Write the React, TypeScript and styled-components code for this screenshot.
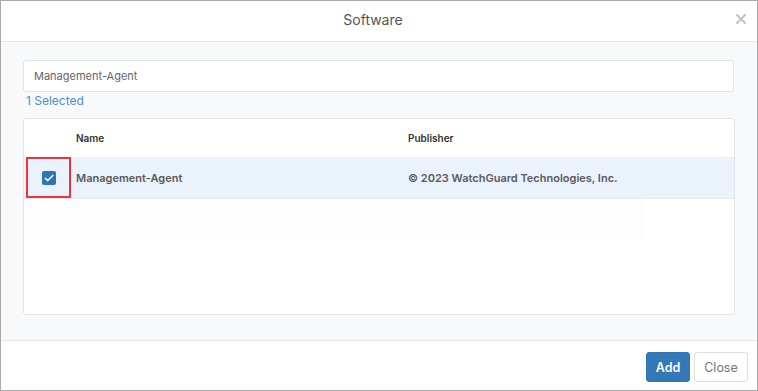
import React from "react";
import styled, { createGlobalStyle } from "styled-components";

const GlobalStyle = createGlobalStyle`
  html, body {
    margin: 0;
    padding: 0;
    background: #ffffff;
    font-family: Inter, "Noto Sans", "Liberation Sans", sans-serif;
  }
  * { box-sizing: border-box; }
`;

const rows = [
  { name: "Management-Agent", publisher: "© 2023 WatchGuard Technologies, Inc.", checked: true },
];

export default function App() {
  return (
    <>
      <GlobalStyle />
      <Modal>
        <Header>
          <Title>Software</Title>
          <CloseX aria-label="close">
            <svg width="10" height="10" viewBox="0 0 10 10">
              <path d="M1 1 L9 9 M9 1 L1 9" stroke="#c4c4c4" strokeWidth="2" strokeLinecap="square" />
            </svg>
          </CloseX>
        </Header>

        <Body>
          <Search value="Management-Agent" readOnly />
          <Selected>1 Selected</Selected>

          <TableCard>
            <HeadRow>
              <CheckCell />
              <NameCell>Name</NameCell>
              <PublisherCell>Publisher</PublisherCell>
            </HeadRow>
            {rows.map((r) => (
              <DataRow key={r.name} $selected={r.checked}>
                <CheckCell $highlight>
                  <Check $checked={r.checked}>
                    <svg width="10" height="8" viewBox="0 0 10 8">
                      <path d="M1.2 4.2 L3.8 6.6 L8.8 1.4" fill="none" stroke="#fff" strokeWidth="1.5" strokeLinecap="round" strokeLinejoin="round" />
                    </svg>
                  </Check>
                </CheckCell>
                <NameCell>{r.name}</NameCell>
                <PublisherCell>{r.publisher}</PublisherCell>
              </DataRow>
            ))}
            <Filler />
          </TableCard>
        </Body>

        <Footer>
          <Button $primary $w={44}>Add</Button>
          <Button $w={54}>Close</Button>
        </Footer>
      </Modal>
    </>
  );
}

const Modal = styled.div`
  width: 758px;
  height: 391px;
  border: 1px solid #a9a9a9;
  display: flex;
  flex-direction: column;
  background: #ffffff;
`;

const Header = styled.div`
  position: relative;
  height: 41px;
  flex: none;
  display: flex;
  align-items: center;
  justify-content: center;
  padding-right: 12px;
  border-bottom: 1px solid #e4e6ea;
`;

const Title = styled.div`
  font-size: 14px;
  color: #555;
  margin-top: -3px;
`;

const CloseX = styled.div`
  position: absolute;
  right: 11px;
  top: 13px;
  line-height: 0;
`;

const Body = styled.div`
  flex: 1;
  background: #f8f9fb;
  padding: 18px 22px 25px 22px;
  display: flex;
  flex-direction: column;
  border-bottom: 1px solid #e4e6ea;
`;

const Search = styled.input`
  height: 32px;
  width: 711px;
  border: 1px solid #e2e4e8;
  border-radius: 3px;
  background: #fff;
  padding: 0 10px;
  font-family: inherit;
  font-size: 11px;
  color: #666;
  outline: none;
`;

const Selected = styled.div`
  font-size: 12px;
  color: #4b8fd2;
  margin: 2px 0 0 3px;
  height: 14px;
  line-height: 14px;
`;

const TableCard = styled.div`
  margin-top: 10px;
  width: 712px;
  flex: 1;
  background: #fff;
  border: 1px solid #e2e4e8;
  border-radius: 3px;
  display: flex;
  flex-direction: column;
`;

const HeadRow = styled.div`
  display: flex;
  align-items: center;
  height: 38px;
  font-size: 10px;
  font-weight: 600;
  color: #333;
`;

const DataRow = styled.div<{ $selected?: boolean }>`
  display: flex;
  align-items: stretch;
  height: 42px;
  background: ${(p) => (p.$selected ? "#eaf2fc" : "#fff")};
  border-bottom: 1px solid #e4e7eb;
  font-size: 11px;
  font-weight: 600;
  color: #5a5a5a;
`;

const CheckCell = styled.div<{ $highlight?: boolean }>`
  width: 45px;
  flex: none;
  margin-left: 2px;
  display: flex;
  align-items: center;
  justify-content: center;
  border: ${(p) => (p.$highlight ? "2px solid #f0323a" : "none")};
`;

const Check = styled.div<{ $checked?: boolean }>`
  width: 14px;
  height: 14px;
  border-radius: 2px;
  background: ${(p) => (p.$checked ? "#2f73b8" : "#fff")};
  display: flex;
  align-items: center;
  justify-content: center;
`;

const NameCell = styled.div`
  width: 337px;
  flex: none;
  padding-left: 5px;
  display: flex;
  align-items: center;
`;

const PublisherCell = styled.div`
  flex: 1;
  display: flex;
  align-items: center;
`;

const Filler = styled.div`
  height: 42px;
  width: 620px;
  background: #fdfdfd;
`;

const Footer = styled.div`
  height: 49px;
  flex: none;
  display: flex;
  justify-content: flex-end;
  align-items: center;
  gap: 4px;
  padding: 3px 9px 0 0;
`;

const Button = styled.button<{ $primary?: boolean; $w: number }>`
  height: 30px;
  width: ${(p) => p.$w}px;
  padding: 0;
  font-family: inherit;
  font-size: 12.5px;
  font-weight: ${(p) => (p.$primary ? 600 : 400)};
  border-radius: 3px;
  border: 1px solid ${(p) => (p.$primary ? "#2f74b5" : "#dedede")};
  background: ${(p) => (p.$primary ? "#3379b7" : "#fff")};
  color: ${(p) => (p.$primary ? "#fff" : "#777")};
`;
